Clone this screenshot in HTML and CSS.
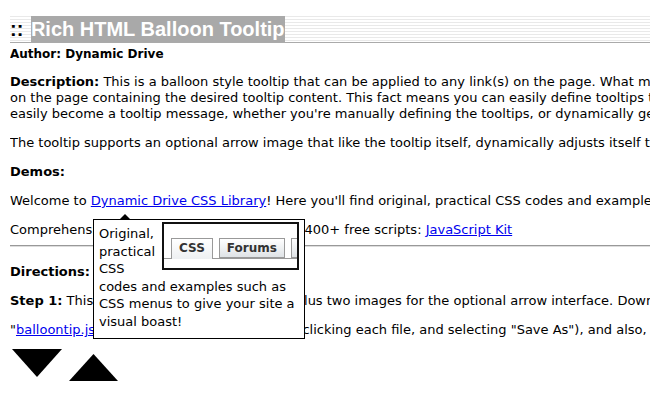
FILE: index.html
```html
<!DOCTYPE html>
<html lang="en">
<head>
    <meta charset="UTF-8">
    <title>Rich HTML Balloon Tooltip</title>
    <link rel="stylesheet" href="styles.css">
</head>
<body>
    <h2 class="title">:: <span>Rich HTML Balloon Tooltip</span></h2>
    <div class="author"><b>Author: Dynamic Drive</b></div>

    <p class="desc"><b>Description:</b> This is a balloon style tooltip that can be applied to any link(s) on the page. What makes it unique is that the tooltip's content is derived from an arbitrary DIV<br>
    on the page containing the desired tooltip content. This fact means you can easily define tooltips that contain rich HTML, and that any content on the page can<br>
    easily become a tooltip message, whether you're manually defining the tooltips, or dynamically generating them via server side scripting.</p>

    <p>The tooltip supports an optional arrow image that like the tooltip itself, dynamically adjusts itself to stay in view.</p>

    <p><b>Demos:</b></p>

    <p>Welcome to <a href="#" class="tip">Dynamic Drive CSS Library</a>! Here you'll find original, practical CSS codes and examples such as CSS menus.</p>

    <p class="before-rule">Comprehensive JavaScript tutorials and over 400+ free scripts: <a href="#">JavaScript Kit</a></p>

    <hr>

    <p><b>Directions:</b></p>

    <p><b>Step 1:</b> This script uses two separate files, plus two images for the optional arrow interface. Download them below.</p>

    <p>"<a href="#">balloontip.js</a>" and "balloontip.css" (via right clicking each file, and selecting "Save As"), and also, the two images below:</p>

    <div class="arrows">
        <svg class="arrow-down" width="50" height="28" viewBox="0 0 50 28"><polygon points="0,0 50,0 25,28" fill="#000"/></svg>
        <svg class="arrow-up" width="49" height="27" viewBox="0 0 49 27"><polygon points="24.5,0 49,27 0,27" fill="#000"/></svg>
    </div>

    <!-- balloon tooltip -->
    <div class="balloon">
        <div class="pointer"></div>
        <div class="shot">
            <div class="tabs">
                <div class="tab on">CSS</div>
                <div class="tab">Forums</div>
                <div class="tab cut"></div>
            </div>
        </div>
        Original, practical CSS codes and examples such as CSS menus to give your site a visual boast!
    </div>
</body>
</html>
```

FILE: styles.css
```css
html{
    overflow: hidden;
}
body{
    width: 960px;
    margin: 0 10px;
    font-family: "DejaVu Sans", Verdana, sans-serif;
    font-size: 13px;
    line-height: 16px;
    color: #000;
    background: #fff;
    white-space: nowrap;
}
a{
    color: #0000ee;
}
p{
    margin: 13px 0;
}
p.desc{
    margin-top: 12px;
}
p.before-rule{
    margin-bottom: 0;
}
.title{
    margin: 14px 0 0;
    padding-top: 2px;
    height: 26px;
    font-family: "Liberation Sans", Arial, sans-serif;
    font-size: 20px;
    line-height: 26px;
    border-bottom: 1px solid #aaa;
    background: repeating-linear-gradient(#fff 0, #fff 2px, #e9e9e9 2px, #e9e9e9 3px);
}
.title span{
    display: inline-block;
    margin-left: 2px;
    background: #a9a9a9;
    color: #fff;
}
.author{
    margin-top: 3px;
    font-size: 12px;
}
hr{
    margin: 7px 0 17px;
    border: 0;
    border-top: 1px solid #999;
    border-bottom: 1px solid #ddd;
}
.arrows{
    display: flex;
    align-items: flex-start;
    gap: 7px;
    margin: -2px 0 0 2px;
}
.arrow-up{
    margin-top: 5px;
}

/* tooltip */
.balloon{
    position: absolute;
    left: 93px;
    top: 219px;
    width: 200px;
    padding: 5px 5px 7px;
    line-height: 17.6px;
    white-space: normal;
    background: #fff;
    border: 1px solid #000;
}
.balloon .pointer{
    position: absolute;
    left: 26px;
    top: -6px;
    width: 0;
    height: 0;
    border-left: 5px solid transparent;
    border-right: 5px solid transparent;
    border-bottom: 5px solid #000;
}
.shot{
    float: right;
    width: 133px;
    height: 44px;
    margin-top: -3px;
    border: 2px solid #111;
    background: #fff;
    overflow: hidden;
}
.tabs{
    display: flex;
    gap: 6px;
    margin-top: 14px;
    padding-left: 7px;
    height: 20px;
    border-bottom: 1px solid #999;
}
.tab{
    height: 18px;
    padding: 0 7px;
    font-size: 12px;
    font-weight: bold;
    line-height: 18px;
    color: #333;
    border: 1px solid #999;
    background: linear-gradient(#fff, #dfe3e6);
}
.tab.on{
    height: 20px;
    border-bottom: 0;
    background: linear-gradient(#fff, #eef0f2);
}
.tab.cut{
    width: 10px;
    padding: 0;
    flex-shrink: 0;
}
```
